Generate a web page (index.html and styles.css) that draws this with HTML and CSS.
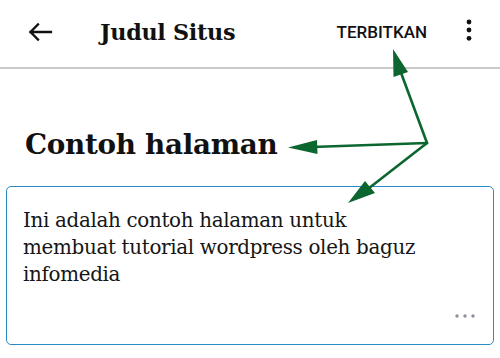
FILE: index.html
```html
<!DOCTYPE html>
<html lang="id">
<head>
<meta charset="utf-8">
<title>Judul Situs</title>
<link rel="stylesheet" href="styles.css">
</head>
<body>
<div class="page">
  <header class="topbar">
    <button class="back" aria-label="Kembali">
      <svg width="26" height="20" viewBox="0 0 26 20"><path d="M24 10H3.5M11 2.5L3.5 10L11 17.5" fill="none" stroke="#111" stroke-width="2.3" stroke-linecap="square"/></svg>
    </button>
    <h1 class="site-title">Judul Situs</h1>
    <button class="publish">TERBITKAN</button>
    <button class="more" aria-label="Lainnya">
      <svg width="8" height="22" viewBox="0 0 8 22"><circle cx="4" cy="3" r="2.4" fill="#111"/><circle cx="4" cy="11" r="2.4" fill="#111"/><circle cx="4" cy="19.3" r="2.4" fill="#111"/></svg>
    </button>
  </header>
  <main class="content">
    <h2 class="page-title">Contoh halaman</h2>
    <div class="block">
      <p class="block-text">Ini adalah contoh halaman untuk<br>membuat tutorial wordpress oleh baguz<br>infomedia</p>
      <div class="block-dots">
        <svg width="22" height="6" viewBox="0 0 22 6"><circle cx="3" cy="3" r="1.7" fill="#8c929c"/><circle cx="11" cy="3" r="1.7" fill="#8c929c"/><circle cx="19" cy="3" r="1.7" fill="#8c929c"/></svg>
      </div>
    </div>
  </main>
  <svg class="annot" width="500" height="358" viewBox="0 0 500 358">
    <g stroke="#0b662f" stroke-width="2.6" fill="none" stroke-linecap="round">
      <path d="M427 143L400 70"/>
      <path d="M427 143L312 147"/>
      <path d="M427 143L364 192"/>
    </g>
    <g fill="#0b662f">
      <polygon points="393,49 393.5,77 408,72"/>
      <polygon points="288,147.5 317,140 317.5,154"/>
      <polygon points="348,203 365,181 375,193"/>
    </g>
  </svg>
</div>
</body>
</html>
```
FILE: styles.css
```css
* { box-sizing: border-box; }
html, body { margin: 0; padding: 0; background: #fff; }
.page { position: relative; width: 500px; height: 358px; overflow: hidden; }
button { border: 0; background: none; padding: 0; margin: 0; cursor: pointer; }
.topbar {
  height: 69px;
  border-bottom: 2px solid #c9c9c9;
  display: flex;
  align-items: center;
  padding-left: 27px;
}
.back { display: flex; width: 26px; height: 20px; margin-top: -3px; }
.site-title {
  margin: -3px 0 0 47px;
  font-family: "DejaVu Serif", serif;
  font-weight: bold;
  font-size: 22.3px;
  color: #111;
  letter-spacing: -0.3px;
}
.publish {
  margin-left: auto;
  font-family: Roboto, "Noto Sans", sans-serif;
  font-weight: 500;
  font-size: 17px;
  color: #111;
  margin-top: -4px;
}
.more { display: flex; margin: -7px 27px 0 38px; }
.content { padding: 58px 6px 0; }
.page-title {
  margin: 0 0 23px 19px;
  font-family: "DejaVu Serif", serif;
  font-weight: bold;
  font-size: 27.8px;
  line-height: 36px;
  letter-spacing: -0.3px;
  color: #111;
}
.block {
  height: 159px;
  border: 1.6px solid #2a8bc4;
  border-radius: 5px;
  padding: 20px 16px 0 16px;
  display: flex;
  flex-direction: column;
}
.block-text {
  margin: 0;
  white-space: nowrap;
  font-family: "DejaVu Serif", serif;
  font-size: 19.9px;
  line-height: 27px;
  color: #161616;
  letter-spacing: -0.33px;
}
.block-dots { display: flex; justify-content: flex-end; margin-top: auto; margin-bottom: 25px; margin-right: 1px; }
.annot { position: absolute; left: 0; top: 0; pointer-events: none; }
```
